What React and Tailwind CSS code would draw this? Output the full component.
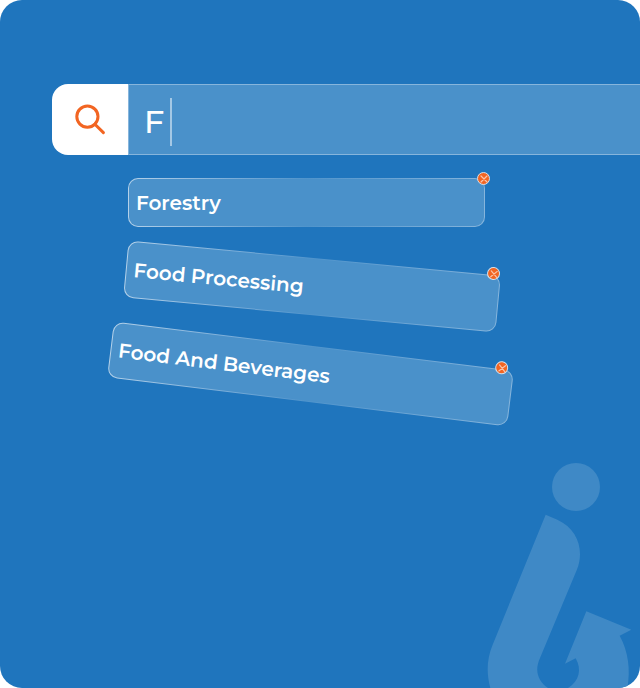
import React from "react";

const suggestions = [
  {
    label: "Forestry",
    box: "ml-[128px] h-[49px] max-w-[357px]",
    close: "-top-[6px] -right-[5px]",
  },
  {
    label: "Food Processing",
    box: "ml-[125px] h-[57px] max-w-[374px] rotate-[5.4deg]",
    close: "-top-[8px] right-[1px]",
  },
  {
    label: "Food And Beverages",
    box: "ml-[109px] h-[56px] max-w-[403px] rotate-[7deg]",
    close: "-top-[8px] right-[6px]",
  },
];

function SearchIcon() {
  return (
    <svg viewBox="0 0 32 32" className="size-8" fill="none" stroke="#f26522" strokeWidth="3" aria-hidden="true">
      <circle cx="13.4" cy="12.6" r="10.6" />
      <path d="M20.9 20.2 L29.4 28.6" strokeLinecap="round" />
    </svg>
  );
}

function Suggestion({ label, box, close }) {
  return (
    <li
      className={`relative rounded-[10px] bg-linear-to-r from-[#b4d1e9] via-[#4f94cc] to-[#86b5dc] p-px ${box}`}
    >
      <div className="flex h-full items-center rounded-[9px] bg-[#4a91ca] pl-[7px]">
        <span className="whitespace-nowrap text-[20px] leading-[24px] font-semibold text-white">{label}</span>
      </div>
      <button
        type="button"
        aria-label={`Remove ${label}`}
        className={`absolute flex size-[13px] items-center justify-center rounded-full border border-[#d5e0ea] bg-[#f26522] ${close}`}
      >
        <svg viewBox="0 0 8 8" className="size-2 shrink-0" stroke="#fbc4aa" strokeWidth="1.2" strokeLinecap="round" aria-hidden="true">
          <path d="M1 1 L7 7 M7 1 L1 7" />
        </svg>
      </button>
    </li>
  );
}

function Watermark() {
  return (
    <svg
      viewBox="0 0 510 720"
      className="pointer-events-none absolute right-0 bottom-0 h-[240px] w-[170px]"
      fill="#3f89c6"
      aria-hidden="true"
    >
      <circle cx="318" cy="117" r="72" />
      <path d="M227 200 L262 215 C308 236 330 276 330 318 Q330 344 320 367 L210 630 C193 667 203 698 234 720 L61 720 C49 675 50 633 68 590 Z" />
      <path d="M349 490 L484 545 L449 563 C475 610 482 666 472 720 L294 720 C328 700 336 664 317 631 L285 647 Z" />
    </svg>
  );
}

export default function App() {
  return (
    <main className="relative min-h-screen overflow-hidden rounded-[22px] bg-[#1f75bd] pt-[84px] font-['Montserrat','Inter',sans-serif]">
      <Watermark />
      <form className="ml-[52px] flex h-[71px]" onSubmit={(e) => e.preventDefault()}>
        <button
          type="submit"
          aria-label="Search"
          className="flex w-[76px] shrink-0 items-center justify-center rounded-l-[16px] bg-white"
        >
          <SearchIcon />
        </button>
        <div className="flex flex-1 items-center border-y border-l border-[#86b5dc] bg-[#4a91ca] pt-[4px] pl-[15px]">
          <input
            type="text"
            aria-label="Search industries"
            defaultValue="F"
            className="h-[48px] w-[28px] border-r-2 border-[#a4c8e5] bg-transparent text-[32px] font-medium text-white outline-none"
          />
        </div>
      </form>
      <ul className="mt-[23px] flex flex-col gap-[31px]">
        {suggestions.map((item) => (
          <Suggestion key={item.label} {...item} />
        ))}
      </ul>
    </main>
  );
}
